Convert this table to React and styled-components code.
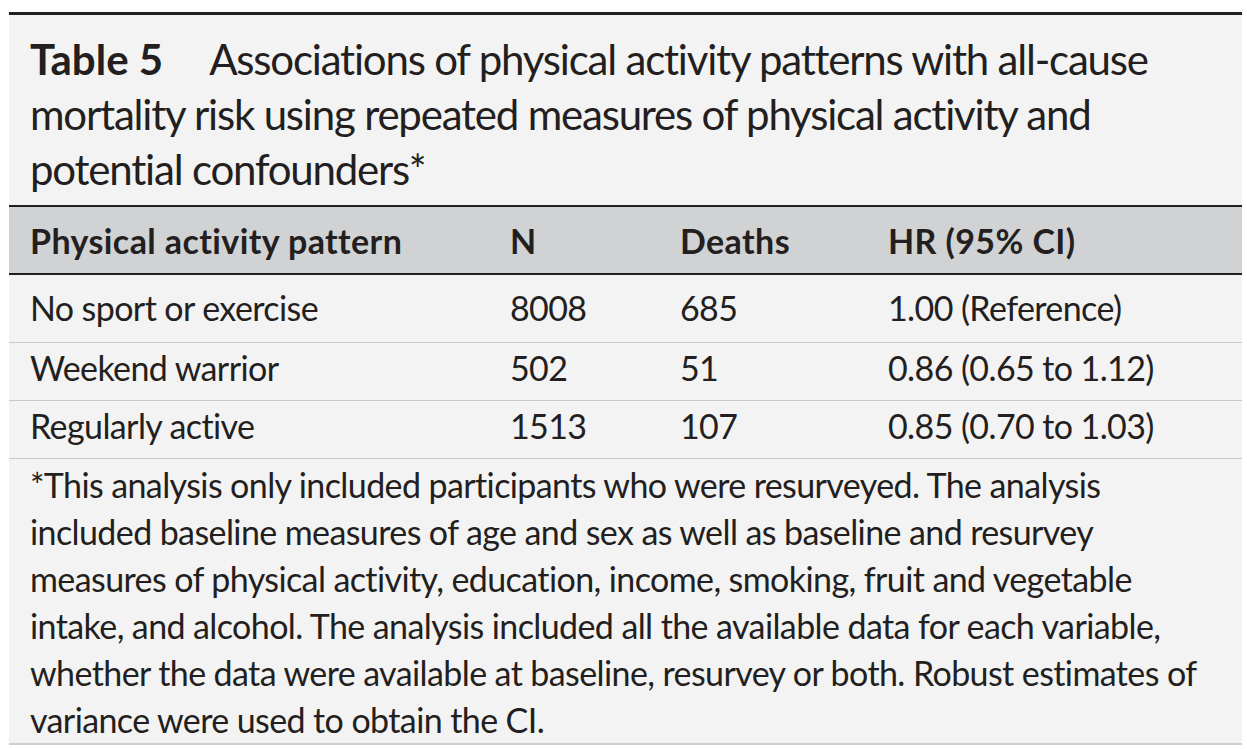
import React from "react";
import styled, { createGlobalStyle } from "styled-components";

const FONT = `Lato, "Open Sans", "Liberation Sans", sans-serif`;

const Global = createGlobalStyle`
  html, body { margin: 0; padding: 0; background: #ffffff; }
  body { font-family: ${FONT}; color: #231f20; }
`;

const Page = styled.div`
  padding: 12px 5px 0 9px;
  width: 1233px;
`;

const Panel = styled.section`
  background: #f3f3f3;
  border-top: 3px solid #231f20;
  border-bottom: 2px solid #cfcfcf;
`;

const Caption = styled.h2`
  margin: 0;
  padding: 17px 0 8px 21px;
  font-size: 42px;
  line-height: 55px;
  font-weight: 400;
  letter-spacing: -1.2px;
  white-space: nowrap;
`;

const Label = styled.strong`
  font-weight: 700;
  letter-spacing: 0;
  margin-right: 46px;
`;

const Row = styled.div`
  display: grid;
  grid-template-columns: 480px 170px 208px 1fr;
  padding: 0 0 0 21px;
  font-size: 34px;
  letter-spacing: -0.6px;
  height: ${(p) => p.$h}px;
  align-items: end;
  padding-bottom: ${(p) => p.$pb}px;
  box-sizing: border-box;
  border-bottom: 1px solid #c9c9c9;
`;

const HeadRow = styled(Row)`
  background: #d1d2d4;
  font-weight: 700;
  letter-spacing: 0.4px;
  border-top: 2px solid #231f20;
  border-bottom: 2px solid #231f20;
`;

const Cell = styled.div`
  white-space: nowrap;
  line-height: 40px;
`;

const Note = styled.p`
  margin: 0;
  padding: 2px 0 0 21px;
  font-size: 34px;
  letter-spacing: -0.6px;
  line-height: 47px;
  white-space: nowrap;
`;

const rows = [
  ["No sport or exercise", "8008", "685", "1.00 (Reference)", 68, 14],
  ["Weekend warrior", "502", "51", "0.86 (0.65 to 1.12)", 58, 12],
  ["Regularly active", "1513", "107", "0.85 (0.70 to 1.03)", 58, 12],
];

export default function App() {
  return (
    <Page>
      <Global />
      <Panel>
        <Caption>
          <Label>Table 5</Label>Associations of physical activity patterns with all-cause
          <br />
          mortality risk using repeated measures of physical activity and
          <br />
          potential confounders*
        </Caption>
        <HeadRow $h={70} $pb={12}>
          <Cell>Physical activity pattern</Cell>
          <Cell>N</Cell>
          <Cell>Deaths</Cell>
          <Cell>HR (95% CI)</Cell>
        </HeadRow>
        {rows.map(([a, b, c, d, h, pb]) => (
          <Row key={a} $h={h} $pb={pb}>
            <Cell>{a}</Cell>
            <Cell>{b}</Cell>
            <Cell>{c}</Cell>
            <Cell>{d}</Cell>
          </Row>
        ))}
        <Note>
          *This analysis only included participants who were resurveyed. The analysis
          <br />
          included baseline measures of age and sex as well as baseline and resurvey
          <br />
          measures of physical activity, education, income, smoking, fruit and vegetable
          <br />
          intake, and alcohol. The analysis included all the available data for each variable,
          <br />
          whether the data were available at baseline, resurvey or both. Robust estimates of
          <br />
          variance were used to obtain the CI.
        </Note>
      </Panel>
    </Page>
  );
}
